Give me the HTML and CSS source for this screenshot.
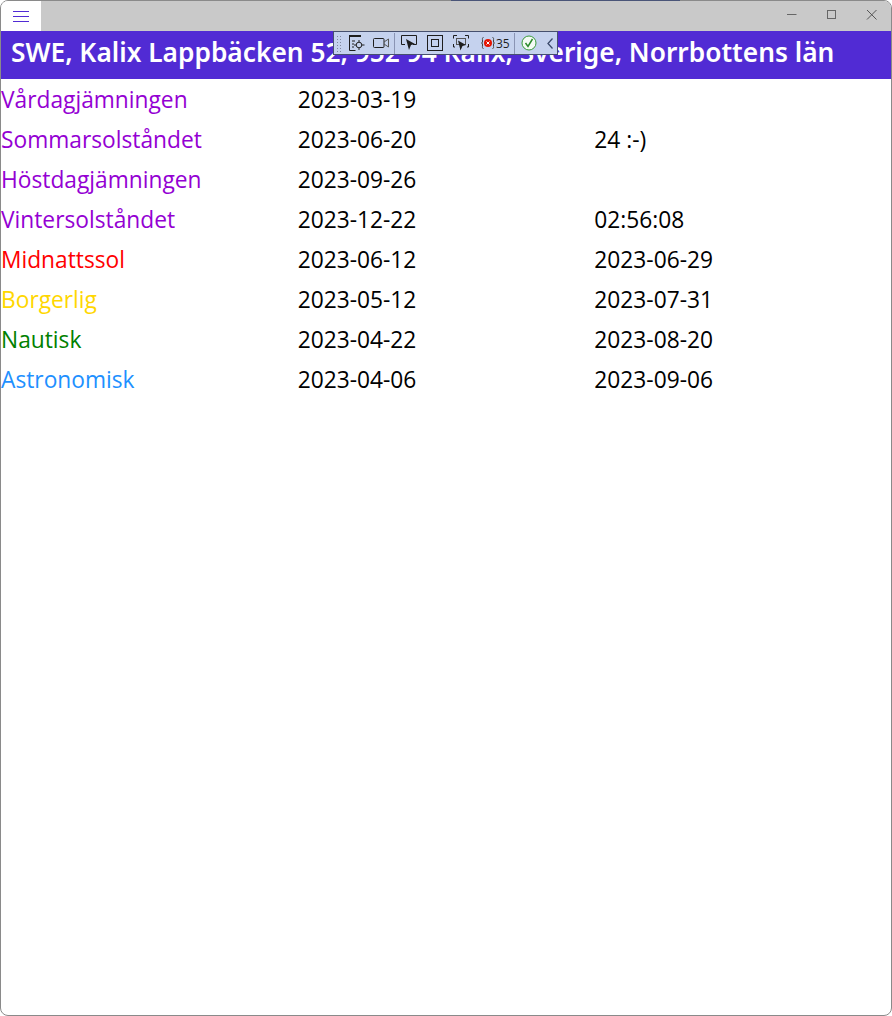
FILE: index.html
```html
<!DOCTYPE html>
<html lang="en">
<head>
    <meta charset="UTF-8">
    <meta name="viewport" content="width=device-width, initial-scale=1.0">
    <title>Sol</title>
    <link rel="stylesheet" href="styles.css">
</head>
<body>
    <div class="window">
        <!-- Title bar -->
        <div class="titlebar">
            <button class="menu-btn">
                <svg width="16" height="11" viewBox="0 0 16 11"><path d="M0 .5h16M0 5.500h16M0 10.500h16" stroke="#512bd4" fill="none"/></svg>
            </button>
            <div class="caption">
                <svg width="40" height="30" viewBox="0 0 40 30"><path d="M16 13.500h9.500" stroke="#666" fill="none"/></svg>
                <svg width="40" height="30" viewBox="0 0 40 30"><rect x="16.500" y="9.500" width="8" height="8" stroke="#666" fill="none"/></svg>
                <svg width="40" height="30" viewBox="0 0 40 30"><path d="M16 9l9.500 9.500M25.500 9L16 18.500" stroke="#555" fill="none"/></svg>
            </div>
        </div>

        <h1 class="location">SWE, Kalix Lappbäcken 52, 952 94 Kalix, Sverige, Norrbottens län</h1>

        <div class="rows">
            <div class="row"><span class="purple">Vårdagjämningen</span><span>2023-03-19</span><span></span></div>
            <div class="row"><span class="purple">Sommarsolståndet</span><span>2023-06-20</span><span>24 :-)</span></div>
            <div class="row"><span class="purple">Höstdagjämningen</span><span>2023-09-26</span><span></span></div>
            <div class="row"><span class="purple">Vintersolståndet</span><span>2023-12-22</span><span>02:56:08</span></div>
            <div class="row"><span class="red">Midnattssol</span><span>2023-06-12</span><span>2023-06-29</span></div>
            <div class="row"><span class="gold">Borgerlig</span><span>2023-05-12</span><span>2023-07-31</span></div>
            <div class="row"><span class="green">Nautisk</span><span>2023-04-22</span><span>2023-08-20</span></div>
            <div class="row"><span class="blue">Astronomisk</span><span>2023-04-06</span><span>2023-09-06</span></div>
        </div>

        <!-- Debug toolbar floats over the page -->
        <div class="debug-bar">
            <span class="grip"></span>
            <svg class="ico gap-s" width="16" height="16" viewBox="0 0 16 16"><path d="M0 1h12" stroke="#1e1e1e" stroke-width="2" fill="none"/><path d="M.5 1v14.500h6M3 6h3M3 9h2M3 12h2" stroke="#1e1e1e" fill="none"/><circle cx="10" cy="10" r="2.800" stroke="#1e1e1e" fill="none"/><path d="M10 5v2M10 13v2M5 10h2M13 10h2.500" stroke="#1e1e1e" fill="none"/></svg>
            <svg class="ico gap-xs" width="16" height="16" viewBox="0 0 16 16"><rect x=".5" y="3.500" width="10.500" height="9" rx="1" stroke="#1e1e1e" fill="none"/><path d="M11 7l4.500-3v8L11 9" stroke="#555" fill="none"/></svg>
            <span class="sep"></span>
            <svg class="ico gap-m" width="16" height="16" viewBox="0 0 16 16"><path d="M4 9.500H.5V.5h15v9H12" stroke="#1e1e1e" fill="none"/><path d="M5 4l9 5-4 1-2 5z" fill="#1e1e1e"/></svg>
            <svg class="ico gap-m" width="16" height="16" viewBox="0 0 16 16"><rect x=".5" y=".5" width="15" height="15" stroke="#1e1e1e" fill="none"/><rect x="4.500" y="4.500" width="7" height="7" stroke="#1e1e1e" fill="none"/></svg>
            <svg class="ico gap-l" width="16" height="16" viewBox="0 0 16 16"><path d="M.5 3.500v-3H4M12 .5h3.500v3M.5 9v3H2M14 12h1.500V9" stroke="#1e1e1e" fill="none"/><rect x="3.500" y="3.500" width="9" height="6" stroke="#555" fill="none"/><path d="M5 5.500l8 4.500-3.500 1-2 4.500z" fill="#1e1e1e"/></svg>
            <span class="errors">
                <svg width="14" height="12" viewBox="0 0 14 12"><path d="M2.500 .5C1 .5 1.500 2 1.500 4S1.500 5.500.5 6c1 .5 1 0 1 2s-.5 3.500 1 3.500M11.500 .5c1.500 0 1 1.500 1 3.500s0 1.500 1 2c-1 .5-1 0-1 2s.5 3.500-1 3.500" stroke="#444" fill="none"/><circle cx="7" cy="6" r="4" fill="#e51400"/><path d="M5.500 4.500l3 3M8.500 4.500l-3 3" stroke="#fff" fill="none"/></svg>
                <span class="count">35</span>
            </span>
            <span class="sep"></span>
            <svg class="ico gap-m" width="16" height="16" viewBox="0 0 16 16"><circle cx="8" cy="8" r="7" stroke="#3a9a3a" fill="#f4fbf4"/><path d="M4.500 8l2.500 3.500L11.500 4" stroke="#2c8a2c" stroke-width="1.500" fill="none"/></svg>
            <svg class="ico" width="6" height="11" viewBox="0 0 6 11"><path d="M5.500 .5L1 5.500l4.500 5" stroke="#3b4a6b" stroke-width="1.300" fill="none"/></svg>
        </div>
    </div>

    <!-- Edge of the window behind, showing on the top border -->
    <span class="behind"></span>
</body>
</html>
```

FILE: styles.css
```css
* { box-sizing: border-box; }
html, body { margin: 0; height: 100%; background: #fff; overflow: hidden; }
.window { position: relative; height: 1016px; background: #fff; border: 1px solid #8a8a8a; border-radius: 8px; overflow: hidden; font-family: "Open Sans", "Noto Sans", sans-serif; }
.behind { position: absolute; left: 451px; top: 0; width: 229px; height: 1px; background: #4a5578; }

.titlebar { display: flex; justify-content: space-between; height: 30px; background: #c9c9c9; }
.menu-btn { display: flex; align-items: center; justify-content: center; width: 40px; height: 30px; padding: 0; border: 0; background: #fff; }
.caption { display: flex; align-items: flex-start; }
.caption svg { display: block; }

.location { margin: 0; height: 48px; padding: 0 10px; line-height: 42px; background: #512bd4; color: #fff; font-family: "Noto Sans", sans-serif; font-size: 26.3px; font-weight: 600; white-space: nowrap; overflow: hidden; }

.rows { display: flex; flex-direction: column; }
.row { display: grid; grid-template-columns: repeat(3, 1fr); height: 40px; align-items: center; font-size: 22.75px; color: #000; }
.purple { color: #9400d3; }
.red { color: #ff0000; }
.gold { color: #ffd700; }
.green { color: #008000; }
.blue { color: #1e90ff; }

.debug-bar { position: absolute; left: 332px; top: 30px; display: flex; align-items: center; width: 225px; height: 24px; background: #c5d2ee; border: 1px solid #46506e; }
.grip { flex: none; width: 7px; height: 17px; margin: 0 6px 0 2px; background-image: radial-gradient(#8088a0 40%, transparent 45%); background-size: 3px 3px; }
.ico { display: block; flex: none; }
.gap-xs { margin-right: 5px; }
.gap-s { margin-right: 8px; }
.gap-m { margin-right: 10px; }
.gap-l { margin-right: 12px; }
.sep { flex: none; width: 1px; height: 21px; margin: 0 6px 0 0; background: #8a94b4; }
.errors { flex: none; display: flex; align-items: center; width: 33px; font-size: 12px; color: #1e1e1e; }
.count { margin-left: 1px; }
```
